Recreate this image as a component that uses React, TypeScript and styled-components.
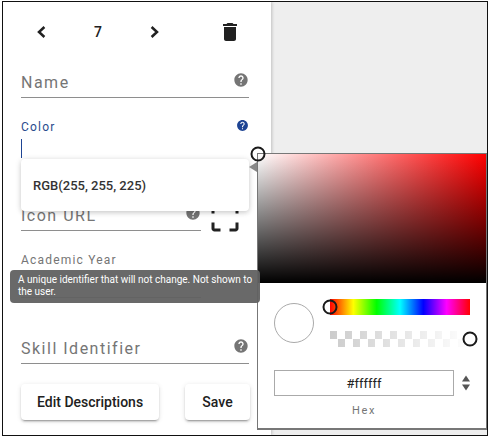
import React from 'react';
import styled, { createGlobalStyle } from 'styled-components';
import { MdCropFree, MdDelete, MdHelp } from 'react-icons/md';

const GlobalStyle = createGlobalStyle`
  html, body {
    margin: 0;
    padding: 0;
    background: #fff;
    font-family: Roboto, "Liberation Sans", sans-serif;
  }
`;

const Frame = styled.div`
  position: relative;
  display: flex;
  box-sizing: border-box;
  width: 486px;
  height: 435px;
  margin: 1px 0 0 2px;
  border: 1px solid #111;
  background: #eee;
  overflow: hidden;
`;

const Sidebar = styled.div`
  box-sizing: border-box;
  display: flex;
  flex-direction: column;
  width: 268px;
  padding: 18px 21px 0 18px;
  background: #fff;
  box-shadow: 1px 0 3px rgba(0, 0, 0, 0.2);
`;

const TopBar = styled.div`
  display: flex;
  align-items: center;
  justify-content: space-between;
  height: 24px;
  padding: 0 8px;
  margin-bottom: 6px;
  color: #212121;
`;

const Pager = styled.div`
  display: flex;
  align-items: center;
  justify-content: space-between;
  width: 138px;
  font-size: 14px;
  font-weight: 500;
  line-height: 22px;
`;

const ChevronIcon = styled.svg`
  display: block;
  width: 24px;
  height: 24px;
  fill: none;
  stroke: currentColor;
  stroke-width: 2.5;
`;

const FieldList = styled.div`
  display: flex;
  flex-direction: column;
  gap: 18.5px;
`;

const FieldRow = styled.div`
  display: flex;
  gap: 6px;
`;

const Field = styled.div<{ $short?: boolean }>`
  box-sizing: border-box;
  display: flex;
  flex-direction: column;
  justify-content: flex-end;
  flex: none;
  width: ${(p) => (p.$short ? '180px' : '228px')};
  height: 48px;
  border-bottom: 1px solid #8e8e8e;
`;

const LabelRow = styled.div<{ $small?: boolean }>`
  display: flex;
  align-items: center;
  justify-content: space-between;
  height: ${(p) => (p.$small ? '14px' : '20px')};
  margin-bottom: ${(p) => (p.$small ? '30px' : '6px')};
`;

const Label = styled.span<{ $small?: boolean; $focused?: boolean }>`
  font-size: ${(p) => (p.$small ? '12px' : '16px')};
  letter-spacing: ${(p) => (p.$small ? '1.2px' : '1.5px')};
  line-height: 1;
  color: ${(p) => (p.$focused ? '#2a4b8d' : '#757575')};
  position: relative;
  top: ${(p) => (p.$small ? '0' : '2px')};
`;

const Help = styled(MdHelp)<{ $focused?: boolean }>`
  display: block;
  flex: none;
  width: ${(p) => (p.$focused ? '13px' : '16px')};
  height: ${(p) => (p.$focused ? '13px' : '16px')};
  margin-top: -2px;
  color: ${(p) => (p.$focused ? '#1e4493' : '#757575')};
`;

const Cursor = styled.span`
  position: absolute;
  left: 18px;
  top: 137px;
  width: 1px;
  height: 19px;
  background: #1e4493;
`;

const CropIcon = styled(MdCropFree)`
  display: block;
  flex: none;
  width: 36px;
  height: 36px;
  margin: 17px 0 -5px;
  color: #212121;
`;

const Actions = styled.div`
  display: flex;
  justify-content: space-between;
  margin-top: 20px;
`;

const Button = styled.button`
  min-width: 65px;
  height: 36px;
  padding: 0 16px;
  border: none;
  border-radius: 4px;
  background: #fff;
  color: #212121;
  font-family: inherit;
  font-size: 14px;
  font-weight: 500;
  box-shadow: 0 3px 1px -2px rgba(0, 0, 0, 0.2), 0 2px 2px 0 rgba(0, 0, 0, 0.14), 0 1px 5px 0 rgba(0, 0, 0, 0.12);
`;

const Dropdown = styled.div`
  position: absolute;
  left: 18px;
  top: 157px;
  box-sizing: border-box;
  display: flex;
  align-items: center;
  width: 228px;
  height: 52px;
  padding: 0 12px;
  border-radius: 4px;
  background: #fff;
  color: #333;
  font-size: 13px;
  font-weight: 500;
  box-shadow: 0 1px 6px rgba(0, 0, 0, 0.16), 0 2px 4px rgba(0, 0, 0, 0.08);
`;

const Tooltip = styled.div`
  position: absolute;
  left: 7px;
  top: 268px;
  z-index: 3;
  box-sizing: border-box;
  width: 250px;
  height: 33px;
  padding: 4px 4px 4px 8px;
  border-radius: 4px;
  background: rgba(97, 97, 97, 0.95);
  color: #fff;
  font-size: 10px;
  line-height: 12px;
`;

const Picker = styled.div`
  position: absolute;
  left: 254px;
  top: 151px;
  z-index: 2;
  box-sizing: border-box;
  width: 231px;
  height: 277px;
  border: 1px solid #777;
  border-right-width: 2px;
  border-bottom-width: 2px;
  background: #fff;
`;

const Arrow = styled.div`
  position: absolute;
  left: -9px;
  top: 8px;
  width: 0;
  height: 0;
  border-top: 5px solid transparent;
  border-bottom: 5px solid transparent;
  border-right: 8px solid #888;
`;

const Handle = styled.div`
  position: absolute;
  box-sizing: border-box;
  width: 15px;
  height: 15px;
  border: 2px solid #1a1a1a;
  border-radius: 50%;
  transform: translate(-50%, -50%);
`;

const SatPanel = styled.div`
  position: relative;
  height: 129px;
  background: linear-gradient(to top, #000, transparent), linear-gradient(to right, #fff, #f00);
`;

const Controls = styled.div`
  display: flex;
  gap: 16px;
  padding: 16px 16px 0;
`;

const Preview = styled.div`
  box-sizing: border-box;
  flex: none;
  align-self: center;
  width: 40px;
  height: 40px;
  border: 1px solid #aaa;
  border-radius: 50%;
  background: #fff;
`;

const Sliders = styled.div`
  display: flex;
  flex-direction: column;
  gap: 16px;
  width: 140px;
`;

const HueBar = styled.div`
  position: relative;
  height: 16px;
  background: linear-gradient(to right, #f00, #ff0, #0f0, #0ff, #00f, #f0f, #f00);
`;

const AlphaBar = styled.div`
  position: relative;
  height: 16px;
  background-image: linear-gradient(to right, rgba(255, 255, 255, 0), #fff),
    conic-gradient(#fff 25%, #ccc 0 50%, #fff 0 75%, #ccc 0);
  background-size: 100% 100%, 15px 16px;
`;

const HexRow = styled.div`
  display: flex;
  align-items: center;
  gap: 8px;
  padding: 23px 16px 0;
`;

const HexInput = styled.input`
  box-sizing: border-box;
  width: 180px;
  height: 26px;
  padding: 0;
  border: 1px solid #aaa;
  border-radius: 0;
  outline: none;
  text-align: center;
  color: #222;
  font-family: inherit;
  font-size: 13px;
`;

const SwapIcon = styled.svg`
  display: block;
  width: 8px;
  height: 16px;
  color: #555;
`;

const HexLabel = styled.div`
  width: 180px;
  margin: 8px 0 0 16px;
  text-align: center;
  color: #757575;
  font-size: 11px;
  letter-spacing: 1.6px;
  line-height: 13px;
`;

export default function App() {
  return (
    <>
      <GlobalStyle />
      <Frame>
        <Sidebar>
          <TopBar>
            <Pager>
              <ChevronIcon viewBox="0 0 24 24">
                <path d="M15.4 7 10 12l5.4 5" />
              </ChevronIcon>
              <span>7</span>
              <ChevronIcon viewBox="0 0 24 24">
                <path d="M8.6 7 14 12l-5.4 5" />
              </ChevronIcon>
            </Pager>
            <MdDelete size={24} />
          </TopBar>
          <FieldList>
            <Field>
              <LabelRow>
                <Label>Name</Label>
                <Help />
              </LabelRow>
            </Field>
            <Field>
              <LabelRow $small>
                <Label $small $focused>Color</Label>
                <Help $focused />
              </LabelRow>
            </Field>
            <FieldRow>
              <Field $short>
                <LabelRow>
                  <Label>Icon URL</Label>
                  <Help />
                </LabelRow>
              </Field>
              <CropIcon />
            </FieldRow>
            <Field $short>
              <LabelRow $small>
                <Label $small>Academic Year</Label>
              </LabelRow>
            </Field>
            <Field>
              <LabelRow>
                <Label>Skill Identifier</Label>
                <Help />
              </LabelRow>
            </Field>
          </FieldList>
          <Actions>
            <Button>Edit Descriptions</Button>
            <Button>Save</Button>
          </Actions>
        </Sidebar>
        <Cursor />
        <Dropdown>RGB(255, 255, 225)</Dropdown>
        <Tooltip>A unique identifier that will not change. Not shown to the user.</Tooltip>
        <Picker>
          <Arrow />
          <SatPanel>
            <Handle style={{ left: 0, top: 0 }} />
          </SatPanel>
          <Controls>
            <Preview />
            <Sliders>
              <HueBar>
                <Handle style={{ left: 0, top: '50%' }} />
              </HueBar>
              <AlphaBar>
                <Handle style={{ left: '100%', top: '50%' }} />
              </AlphaBar>
            </Sliders>
          </Controls>
          <HexRow>
            <HexInput readOnly value="#ffffff" />
            <SwapIcon viewBox="0 0 8 16" fill="currentColor">
              <path d="M4 0.5 8 6.5H0z" />
              <path d="M0 9.5h8L4 15.5z" />
            </SwapIcon>
          </HexRow>
          <HexLabel>Hex</HexLabel>
        </Picker>
      </Frame>
    </>
  );
}
